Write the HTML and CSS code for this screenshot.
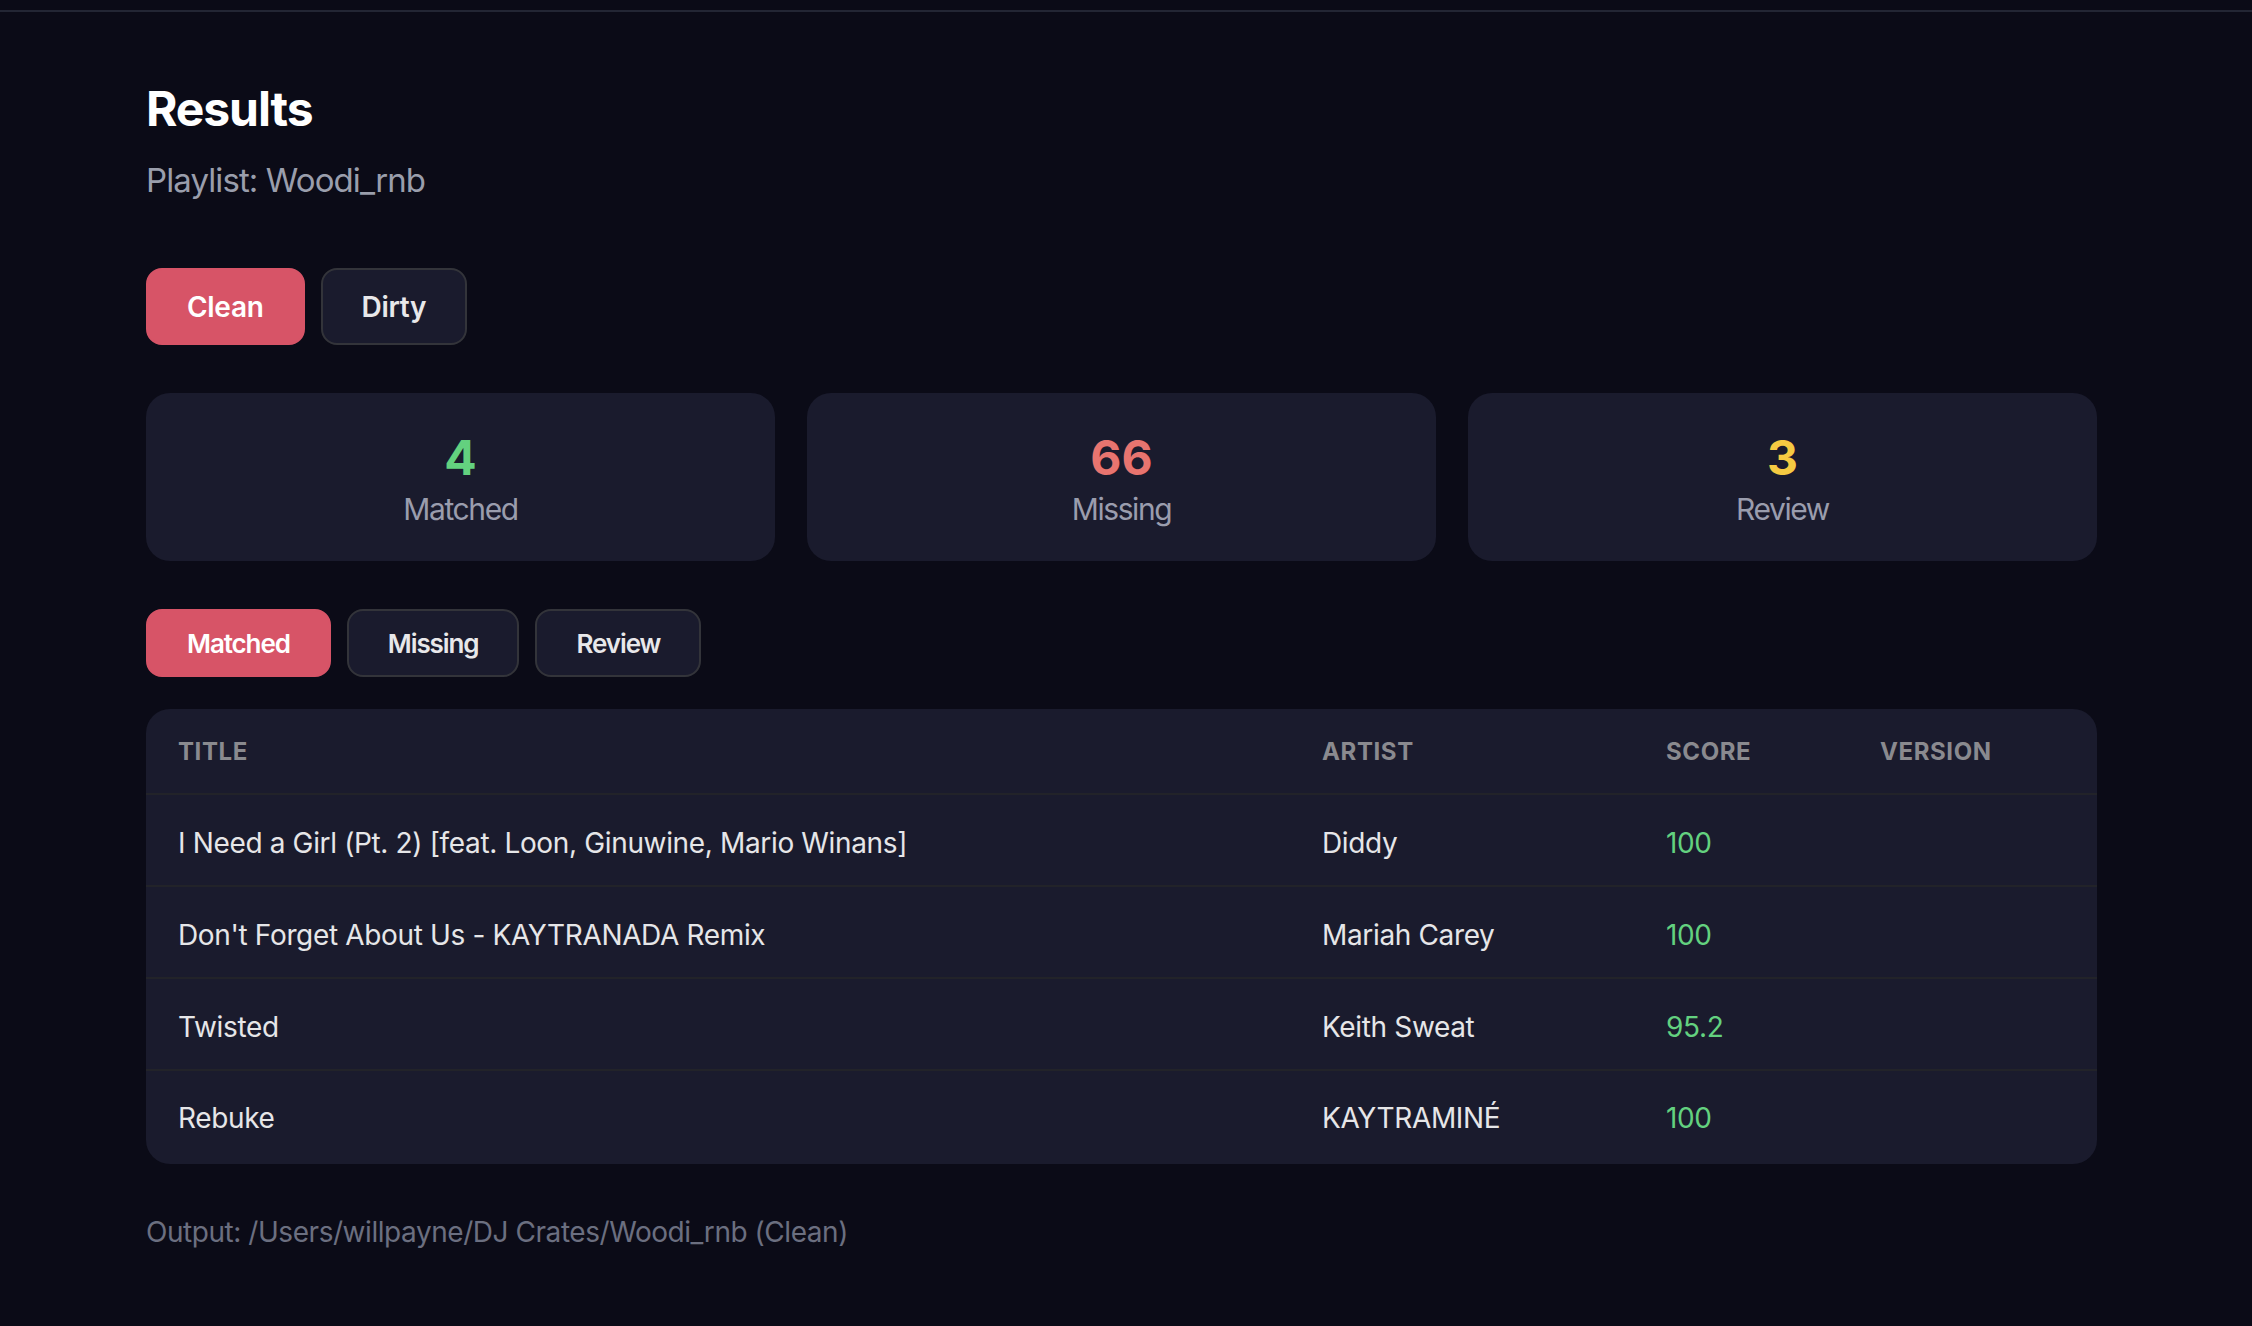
FILE: index.html
```html
<!DOCTYPE html>
<html lang="en">
<head>
<meta charset="utf-8">
<title>Results</title>
<link rel="stylesheet" href="styles.css">
</head>
<body>
<div class="topbar"></div>
<main class="page">
  <h1 class="title">Results</h1>
  <p class="subtitle">Playlist: Woodi_rnb</p>

  <div class="toggle">
    <button class="btn btn-lg active">Clean</button>
    <button class="btn btn-lg">Dirty</button>
  </div>

  <section class="stats">
    <div class="stat">
      <div class="stat-num green">4</div>
      <div class="stat-label">Matched</div>
    </div>
    <div class="stat">
      <div class="stat-num red">66</div>
      <div class="stat-label">Missing</div>
    </div>
    <div class="stat">
      <div class="stat-num yellow">3</div>
      <div class="stat-label">Review</div>
    </div>
  </section>

  <div class="tabs">
    <button class="btn btn-sm active">Matched</button>
    <button class="btn btn-sm">Missing</button>
    <button class="btn btn-sm">Review</button>
  </div>

  <div class="table-wrap">
    <table class="results">
      <colgroup>
        <col class="c-title">
        <col class="c-artist">
        <col class="c-score">
        <col class="c-version">
      </colgroup>
      <thead>
        <tr><th>Title</th><th>Artist</th><th>Score</th><th>Version</th></tr>
      </thead>
      <tbody>
        <tr><td>I Need a Girl (Pt. 2) [feat. Loon, Ginuwine, Mario Winans]</td><td>Diddy</td><td class="score">100</td><td></td></tr>
        <tr><td>Don't Forget About Us - KAYTRANADA Remix</td><td>Mariah Carey</td><td class="score">100</td><td></td></tr>
        <tr><td>Twisted</td><td>Keith Sweat</td><td class="score">95.2</td><td></td></tr>
        <tr><td>Rebuke</td><td>KAYTRAMINÉ</td><td class="score">100</td><td></td></tr>
      </tbody>
    </table>
  </div>

  <p class="output">Output: /Users/willpayne/DJ Crates/Woodi_rnb (Clean)</p>
</main>
</body>
</html>
```
FILE: styles.css
```css
* { box-sizing: border-box; }

html, body {
  margin: 0;
  padding: 0;
  background: #0b0b17;
  font-family: Inter, "Noto Sans", "Liberation Sans", sans-serif;
  color: #e6e6ea;
}

.topbar {
  height: 12px;
  border-bottom: 2px solid #232634;
}

.page {
  width: 1951px;
  margin-left: 146px;
  padding-top: 68px;
}

.title {
  margin: 0;
  font-size: 48px;
  line-height: 58px;
  font-weight: 700;
  color: #ffffff;
  letter-spacing: -1.1px;
}

.subtitle {
  margin: 22px 0 0;
  font-size: 33px;
  line-height: 40px;
  font-weight: 400;
  color: #9a9eac;
  letter-spacing: -0.9px;
}

.toggle {
  display: flex;
  gap: 16px;
  margin-top: 68px;
}

.btn {
  font-family: inherit;
  background: #1a1b2d;
  color: #e8e8ea;
  border: 2px solid #33343a;
  border-radius: 16px;
  font-weight: 600;
  cursor: pointer;
}

.btn.active {
  background: #d75467;
  border-color: #d75467;
  color: #ffffff;
}

.btn-lg {
  height: 77px;
  padding: 0 39px;
  font-size: 28px;
  letter-spacing: -0.3px;
}

.btn-sm {
  height: 68px;
  padding: 0 39px;
  font-size: 26px;
  letter-spacing: -1.1px;
}

.stats {
  display: grid;
  grid-template-columns: repeat(3, 1fr);
  gap: 32px;
  margin-top: 48px;
}

.stat {
  background: #1a1b2d;
  border-radius: 24px;
  padding: 36px 0 34px;
  text-align: center;
}

.stat-num {
  font-size: 48px;
  line-height: 58px;
  font-weight: 700;
}

.stat-label {
  margin-top: 4px;
  font-size: 30px;
  line-height: 36px;
  color: #9a9dad;
  letter-spacing: -1.4px;
}

.green { color: #63d17f; }
.red { color: #e8746f; }
.yellow { color: #f5ca42; }

.tabs {
  display: flex;
  gap: 16px;
  margin-top: 48px;
}

.table-wrap {
  margin-top: 32px;
  background: #1a1b2d;
  border-radius: 24px;
  overflow: hidden;
}

.results {
  width: 100%;
  border-collapse: collapse;
  table-layout: fixed;
}

.c-title { width: 1144px; }
.c-artist { width: 344px; }
.c-score { width: 214px; }
.c-version { width: 249px; }

.results th {
  height: 85px;
  padding: 0 32px;
  text-align: left;
  font-size: 24px;
  font-weight: 700;
  letter-spacing: 0.6px;
  text-transform: uppercase;
  color: #8a8a8f;
  border-bottom: 2px solid #222329;
}

.results td {
  height: 92px;
  padding: 6px 32px 0;
  font-size: 28px;
  font-weight: 400;
  color: #e6e6e8;
  border-bottom: 2px solid #222329;
  white-space: nowrap;
  letter-spacing: -0.35px;
}

.results tbody tr:last-child td {
  border-bottom: none;
  height: 94px;
  padding-top: 0;
}

.results td.score { color: #63d17f; }

.output {
  margin: 51px 0 0;
  font-size: 28px;
  line-height: 34px;
  color: #6b6f80;
  letter-spacing: -0.45px;
}
```
